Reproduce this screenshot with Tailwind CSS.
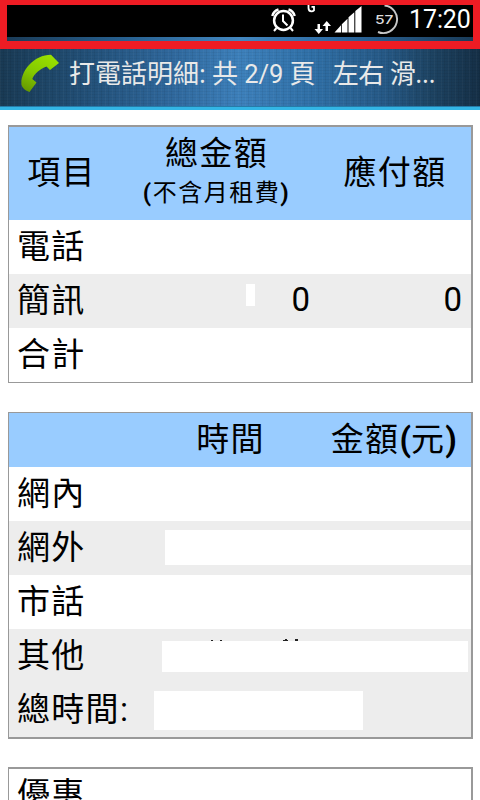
<!DOCTYPE html>
<html lang="zh-Hant">
<head>
    <meta charset="UTF-8">
    <meta name="viewport" content="width=device-width, initial-scale=1.0">
    <title>打電話明細</title>
    <script src="https://cdn.jsdelivr.net/npm/@tailwindcss/browser@4"></script>
</head>
<body class="bg-white w-[480px] h-[800px] overflow-hidden font-['Roboto','Noto_Sans_CJK_TC',sans-serif] text-black">
    <!-- Status bar -->
    <div class="h-[49px] border-[#ee1c24] border-t-[5px] border-x-[7px] border-b-8 bg-black flex flex-col">
        <div class="h-8 flex justify-end items-start text-white">
            <!-- Alarm, network, signal, battery -->
            <svg class="w-[134px] h-8 shrink-0" viewBox="268 5 134 32" fill="none">
                <circle cx="283.5" cy="20.5" r="9.4" stroke="#fff" stroke-width="2.5"/>
                <path d="M283 14.5v6.5l4.5 4.5M276.5 28l-2.5 3M290.500 28l2.500 3" stroke="#fff" stroke-width="2"/>
                <path d="M272.300 16a9 9 0 0 1 6.200-6.500M294.700 16a9 9 0 0 0-6.200-6.500" stroke="#fff" stroke-width="2.400"/>
                <path d="M308.500 5v3q0 3.300 3 3.300 1.500 0 2.500-1V6.800h-2.500" stroke="#fff" stroke-width="1.800"/>
                <path d="M317.500 24h2.500v5h3l-4.250 5-4.250-5h3zM325.500 31h2.500v-5h3l-4.250-5-4.250 5h3z" fill="#fff"/>
                <path d="M334.500 32.500L341 25.300v7.200zM341.800 24.300l5.700-5.600v13.800h-5.700zM348.500 17.300l5.800-5v20.200h-5.800zM355.300 11l6.200-5v26.500h-6.200z" fill="#fff"/>
                <path d="M384.500 5.500a13.800 13.800 0 1 1-6.500 26.500" stroke="#c8c8c8" stroke-width="1.900"/>
                <text x="375" y="23.500" textLength="18.500" lengthAdjust="spacingAndGlyphs" font-size="12" font-family="Inter" font-weight="500" fill="#ddd">57</text>
            </svg>
            <div class="w-[71px] pl-[7px] text-[25px] leading-[29px] tracking-[-0.1px] whitespace-nowrap">17:20</div>
        </div>
        <div class="h-1 bg-[linear-gradient(90deg,#1b3c58,#27608f_25%,#4387c0_50%,#2f6ca4_70%,#1a3c59)]"></div>
    </div>

    <!-- Title bar -->
    <div class="h-[61px] border-b-[3px] border-[#33b5e5] bg-[repeating-linear-gradient(90deg,#ffffff08_0_1px,#00000000_1px_3px,#0000000e_3px_4px,#00000000_4px_7px),repeating-linear-gradient(0deg,#0000000c_0_1px,#00000000_1px_3px),linear-gradient(90deg,#193a54_0%,#224f76_17%,#2f679b_35%,#3d80bb_50%,#3070a7_65%,#265986_80%,#1d4362_90%,#152f46_100%)]">
        <div class="h-[58px] border-b border-[#267ba8] flex items-start pl-[21px]">
            <svg class="w-[39px] h-[40px] mt-[5px] shrink-0" viewBox="0 0 39 40">
                <defs>
                    <linearGradient id="phone" x1="0.700" y1="0" x2="0.200" y2="1">
                        <stop offset="0" stop-color="#99df00"/>
                        <stop offset="0.550" stop-color="#83c800"/>
                        <stop offset="1" stop-color="#669900"/>
                    </linearGradient>
                </defs>
                <path d="M30 .7L38 9L29 16L25.500 12.500C19 15 13 20 11.300 25L15.500 28.500L8.500 38Q2 36 .5 31C-1 18 12 1 30 .7Z" fill="url(#phone)"/>
            </svg>
            <div class="pl-[9px] pt-[6px] text-[26px] leading-[36px] text-[#e9e9e9] whitespace-pre [word-spacing:-0.6px] font-['Open_Sans','Noto_Sans_CJK_TC',sans-serif]">打電話明細: 共 <span class="font-['Roboto'] text-[25.500px]">2/9</span> 頁<span class="tracking-[-0.400px]">   左右 滑…</span></div>
        </div>
    </div>

    <div class="pl-2 pt-[15px] w-[473px] text-[33px] leading-[52px] tracking-[1.300px]">
        <!-- Amount table -->
        <div class="border border-t-2 border-r-2 border-[#999]">
            <div class="grid grid-cols-[105px_205px_1fr] h-[93px] bg-[#99ccff] text-center">
                <div class="leading-[91px]">項目</div>
                <div class="pt-[6px]">
                    <div class="leading-[42px]">總金額</div>
                    <div class="text-[24px] leading-[36px] tracking-[1.500px]"><span class="font-bold">(</span>不含月租費<span class="font-bold">)</span></div>
                </div>
                <div class="leading-[91px]">應付額</div>
            </div>
            <div class="h-[54px] pl-2 leading-[54px]">電話</div>
            <div class="relative grid grid-cols-[105px_205px_1fr] h-[54px] bg-[#ededed]">
                <div class="pl-2 leading-[54px]">簡訊</div>
                <div class="text-right tracking-normal pr-[9px]">0</div>
                <div class="text-right tracking-normal pr-[9px]">0</div>
                <div class="absolute left-[237px] top-[10px] w-[9px] h-[22px] bg-white"></div>
            </div>
            <div class="h-[54px] pl-2 leading-[54px]">合計</div>
        </div>

        <!-- Duration table -->
        <div class="mt-[29px] border border-b-2 border-r-2 border-[#999] leading-[54px]">
            <div class="grid grid-cols-[132px_179px_1fr] h-[54px] bg-[#99ccff] text-center">
                <div></div>
                <div>時間</div>
                <div class="pr-[2px]">金額<span class="font-bold tracking-normal">(</span>元<span class="font-bold">)</span></div>
            </div>
            <div class="h-[54px] pl-2">網內</div>
            <div class="relative h-[54px] pl-2 bg-[#ededed]">網外
                <div class="absolute left-[156px] right-0 top-[9px] h-[35px] bg-white"></div>
            </div>
            <div class="h-[54px] pl-2">市話</div>
            <div class="relative h-[54px] pl-2 bg-[#ededed]">其他
                <svg class="absolute left-[200px] top-[10px] w-[92px] h-[2px]" viewBox="0 0 92 2" fill="#222">
                    <path d="M2 1h2v1H2zM11 1h2v1h-2zM74 1h5v1h-5zM76 0h2v1h-2zM86 0h3v2h-3z"/>
                </svg>
                <div class="absolute left-[153px] right-[3px] top-[12px] h-[31px] bg-white"></div>
            </div>
            <div class="relative h-[54px] pl-2 bg-[#ededed]">總時間:
                <div class="absolute left-[145px] top-[8px] w-[209px] h-[39px] bg-white"></div>
            </div>
        </div>

        <!-- Discount table -->
        <div class="mt-[28px] border border-t-2 border-r-2 border-[#999]">
            <div class="h-[54px] pl-2">優惠</div>
        </div>
    </div>
</body>
</html>
